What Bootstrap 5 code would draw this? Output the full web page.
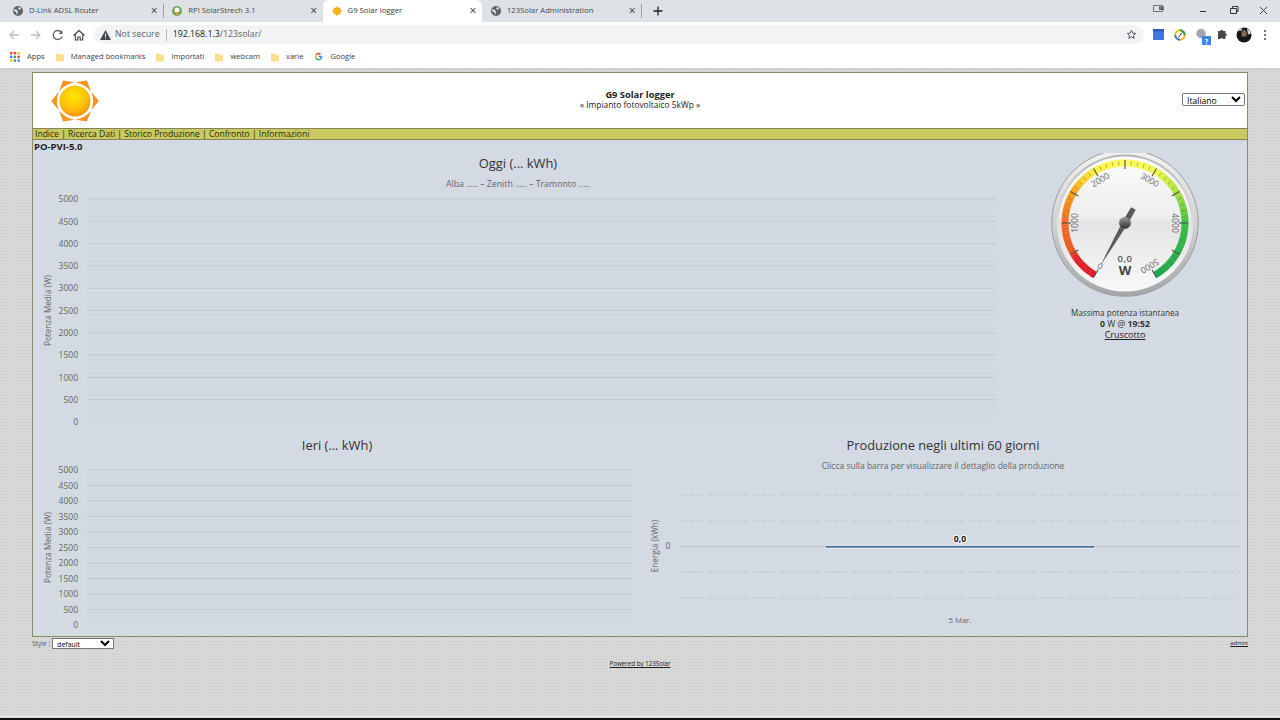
<!DOCTYPE html>
<html lang="it">
<head>
  <meta charset="UTF-8" />
  <title>G9 Solar logger</title>
  <link href="https://cdn.jsdelivr.net/npm/bootstrap@5.3.0/dist/css/bootstrap.min.css" rel="stylesheet"/>
  <style>
    html, body { height: 720px; overflow: hidden; }
    body { margin: 0; background: #fff; color: #222; font-family: "Open Sans", "Liberation Sans", sans-serif; font-size: 9px; line-height: 1.2; }
    svg text { font-family: "Open Sans", "Liberation Sans", sans-serif; }

    .tabstrip { height: 22px; background: #dee1e6; padding-left: 4px; }
    .chrometab { width: 159.3px; height: 22px; padding: 0 3px 0 9px; gap: 6px; font-size: 7.7px; color: #45494e; }
    .chrometab.on-tab { background: #fff; border-radius: 6px 6px 0 0; color: #333; }
    .chrometab .tab-name { flex: 1; white-space: nowrap; }
    .chrometab .tab-x { font-size: 12px; line-height: 1; width: 12px; text-align: center; color: #333; }
    .tab-sep { width: 1px; height: 14px; background: #9da0a5; flex: none; margin-right: -1px; }
    .newtab { margin-left: 12px; }
    .win-btns { margin-left: auto; }

    .toolbar { height: 24px; background: #fff; padding: 3px 0 2px 8px; }
    .addressbar { width: 1050px; height: 19px; background: #f1f3f4; border-radius: 10px; margin-left: 6px; padding: 0 7px 0 6px; font-size: 8.8px; color: #5f6368; white-space: nowrap; }
    .addr-sep { width: 1px; height: 12px; background: #b5b7ba; margin: 0 6px; }
    .addr-host { color: #202124; }
    .bookmarks { height: 22px; background: #fff; padding: 0 0 1px 10px; font-size: 7.6px; color: #3c4043; white-space: nowrap; }
    .bm-item { gap: 3px; margin-right: 11px; }
    .chrome-rule { height: 2px; background: #cfcfcf; }

    .pagearea { height: 646px; padding: 2px 32px 0; background-color: #d8d8d8; background-image: radial-gradient(#c9c9c9 .7px, transparent .8px); background-size: 3px 3px; }
    .screenedge { height: 4px; border-top: 1px solid #eee; border-bottom: 2px solid #111; background: #d5d5d5; }
    .solarbox { height: 565px; border: 1px solid #8b8b60; background: #d4dae3; }
    .solarhead { height: 55px; background: #fff; padding: 0 2px 2px 2px; color: #222; }
    .headside { flex: 1 1 0; }
    .sunlogo { margin-left: 16px; margin-top: 2px; }
    .headtitle { font-weight: 700; font-size: 9.3px; }
    .headsub { font-size: 8.4px; }
    .langsel { font-size: 8.6px; width: 63px; height: 13px; font-family: inherit; }
    .solarmenu { height: 12px; background: #c9c95f; border-top: 1px solid #85855a; border-bottom: 1px solid #85855a; padding-left: 2px; font-size: 8.55px; line-height: 10px; white-space: nowrap; color: #222; }
    .solarmenu a { color: #2b2b10; text-decoration: none; }
    .invname { height: 13px; padding-left: 1px; font-weight: 700; font-size: 9.5px; line-height: 13px; color: #222; }
    .chart-top { width: 970px; height: 277px; display: block; }
    .gaugecol { width: 244px; text-align: center; font-size: 8.7px; line-height: 10.8px; color: #333; }
    .gaugecol a { color: #222; font-size: 9px; }
    .maxpower { font-size: 8.1px; }
    .chart-half { width: 100%; height: 206px; display: block; }
    .sitefoot { font-size: 6.6px; color: #555; height: 12px; padding-top: 1px; }
    .sitefoot a, .poweredby a { color: #222; font-size: 6px; }
    .stylesel { font-size: 7px; line-height: 9px; width: 62px; height: 10.5px; margin-left: 2px; padding: 0; font-family: inherit; background: #fff; }
    .poweredby { text-align: center; margin-top: 9px; line-height: 9px; }
    .poweredby a { font-size: 6.2px; }
  </style>
</head>
<body>
  <!-- browser chrome -->
  <div class="tabstrip d-flex align-items-center">
    <div class="chrometab d-flex align-items-center">
      <svg width="10" height="10" viewBox="0 0 10 10"><circle cx="5" cy="5" r="5" fill="#5f6368"/><path d="M1 3l3 1 1 2-1 3-1-3-2-1zM6 1l2 1-1 2-2-1z" fill="#dee1e6"/></svg>
      <span class="tab-name">D-Link ADSL Router</span><span class="tab-x">×</span>
    </div>
    <div class="tab-sep"></div>
    <div class="chrometab d-flex align-items-center">
      <svg width="10" height="10" viewBox="0 0 10 10"><circle cx="5" cy="5" r="5" fill="#6aa84f"/><circle cx="5" cy="4" r="2.5" fill="#fff"/><path d="M3.5 6h3l-.5 3h-2z" fill="#d8a33a"/></svg>
      <span class="tab-name">RPI SolarStrech 3.1</span><span class="tab-x">×</span>
    </div>
    <div class="chrometab on-tab d-flex align-items-center">
      <svg width="10" height="10" viewBox="0 0 10 10"><circle cx="5" cy="5" r="3.6" fill="#fbb40f"/><path d="M5 0l1.4 1.8H3.6zM5 10l1.4-1.8H3.6zM0 5l1.8-1.4v2.8zM10 5L8.2 3.6v2.8zM1.5 1.5l2 .5-1.5 1.5zM8.5 1.5l-2 .5L8 3.5zM1.5 8.5l2-.5L2 6.5zM8.5 8.5l-2-.5L8 6.5z" fill="#f59c12"/></svg>
      <span class="tab-name">G9 Solar logger</span><span class="tab-x">×</span>
    </div>
    <div class="chrometab d-flex align-items-center">
      <svg width="10" height="10" viewBox="0 0 10 10"><circle cx="5" cy="5" r="5" fill="#5f6368"/><path d="M1 3l3 1 1 2-1 3-1-3-2-1zM6 1l2 1-1 2-2-1z" fill="#dee1e6"/></svg>
      <span class="tab-name">123Solar Administration</span><span class="tab-x">×</span>
    </div>
    <div class="tab-sep"></div>
    <svg class="newtab" width="10" height="10" viewBox="0 0 10 10"><path d="M5 .5v9M.5 5h9" stroke="#202124" stroke-width="1.3"/></svg>
    <div class="win-btns d-flex align-items-start">
      <svg width="127" height="22" viewBox="0 0 127 22">
        <path d="M0.5 5.500h9v6h-9z" fill="none" stroke="#555" stroke-width=".8"/><path d="M6 6.500h5v3.500h-5z" fill="#666"/>
        <path d="M47 11.500h6" stroke="#333"/>
        <path d="M77.500 8.500h6v5h-6zM79.500 8V6.500h5.500v5h-1.500" fill="none" stroke="#333"/>
        <path d="M107 7l7 7M114 7l-7 7" stroke="#444"/>
      </svg>
    </div>
  </div>

  <div class="toolbar d-flex align-items-center">
    <svg width="80" height="14" viewBox="0 0 80 14">
      <path d="M11 7H2M6 3L2 7l4 4" fill="none" stroke="#bcbfc3" stroke-width="1.300"/>
      <path d="M23 7h9M28 3l4 4-4 4" fill="none" stroke="#bcbfc3" stroke-width="1.300"/>
      <path d="M53.500 4.500A4.500 4.500 0 1 0 54 8.500" fill="none" stroke="#5f6368" stroke-width="1.300"/><path d="M54.500 2v4h-4z" fill="#5f6368"/>
      <path d="M71 2.500l-5 4.500h1.300v5h2.500V9h2.400v3h2.500V7h1.300z" fill="none" stroke="#3c4043" stroke-width="1.100"/>
    </svg>
    <div class="addressbar d-flex align-items-center">
      <svg width="11" height="10" viewBox="0 0 11 10"><path d="M5.500 0L11 10H0z" fill="#45494e"/><path d="M5 3.500h1v3.500H5zM5 7.800h1v1H5z" fill="#f1f3f4"/></svg>
      <span class="ms-1">Not secure</span><span class="addr-sep"></span><span class="addr-host">192.168.1.3</span><span>/123solar/</span>
      <svg class="ms-auto" width="11" height="11" viewBox="0 0 24 24"><path d="M12 3l2.800 6 6.500.7-4.900 4.300 1.400 6.500-5.800-3.400-5.800 3.400 1.400-6.500L2.700 9.700 9.200 9z" fill="none" stroke="#45494e" stroke-width="2"/></svg>
    </div>
    <svg class="ms-2" width="125" height="20" viewBox="0 0 125 20">
      <path d="M1 4h11v11H1z" fill="#3f78e0"/><path d="M1 4h11v2.500H1z" fill="#2b5cb8"/>
      <circle cx="28" cy="10" r="4.700" fill="none" stroke="#f2b81f" stroke-width="2"/><path d="M28 5.300a4.700 4.700 0 0 1 4.700 4.700" fill="none" stroke="#2f9e52" stroke-width="2"/><path d="M28 14.700a4.700 4.700 0 0 1-4.700-4.700" fill="none" stroke="#3c78d8" stroke-width="2"/><path d="M30 7.500l-3.500 5" stroke="#333"/>
      <circle cx="49" cy="8.500" r="4.700" fill="#a2a5a9"/><rect x="50" y="11" width="9" height="9" fill="#3b82f0"/><text x="54.500" y="18.500" font-size="7" font-weight="700" fill="#fff" text-anchor="middle">?</text>
      <path d="M66 6h2.500a1.300 1.300 0 0 1 2.600 0h2.400v2.500a1.300 1.300 0 0 1 0 2.600v2.900H71a1.300 1.300 0 0 0-2.500 0H66z" fill="#45494e"/>
      <circle cx="92" cy="10" r="7.500" fill="#151515"/><path d="M89.500 8.500a2.500 3.500 0 0 1 5 0v3h-5z" fill="#8a6a50"/><path d="M95 3.500a7.500 7.500 0 0 1 4 5l-3 1z" fill="#d8d4ce"/><path d="M85.500 6a7.500 7.500 0 0 1 5-3.300l-1 3z" fill="#bfc0c0"/>
      <circle cx="113" cy="6" r="1" fill="#45494e"/><circle cx="113" cy="10" r="1" fill="#45494e"/><circle cx="113" cy="14" r="1" fill="#45494e"/>
    </svg>
  </div>

  <div class="bookmarks d-flex align-items-center">
    <div class="bm-item d-flex align-items-center">
      <svg id="appsDots" width="10" height="10" viewBox="0 0 10 10"></svg><span class="ms-1">Apps</span>
    </div>
    <div class="bm-item d-flex align-items-center"><svg width="8" height="10" viewBox="0 0 9 10"><path d="M0 1h3.500l1 1.200H9V10H0z" fill="#fbdf8e"/></svg><span class="ms-1">Managed bookmarks</span></div>
    <div class="bm-item d-flex align-items-center"><svg width="8" height="10" viewBox="0 0 9 10"><path d="M0 1h3.500l1 1.200H9V10H0z" fill="#fbdf8e"/></svg><span class="ms-1">Importati</span></div>
    <div class="bm-item d-flex align-items-center"><svg width="8" height="10" viewBox="0 0 9 10"><path d="M0 1h3.500l1 1.200H9V10H0z" fill="#fbdf8e"/></svg><span class="ms-1">webcam</span></div>
    <div class="bm-item d-flex align-items-center"><svg width="8" height="10" viewBox="0 0 9 10"><path d="M0 1h3.500l1 1.200H9V10H0z" fill="#fbdf8e"/></svg><span class="ms-1">varie</span></div>
    <div class="bm-item d-flex align-items-center">
      <svg width="9" height="9" viewBox="0 0 18 18"><path d="M3 5a7.500 7.500 0 0 1 11.200-1.600L12 5.600A4.500 4.500 0 0 0 5.500 7z" fill="#ea4335"/><path d="M3 5l2.500 2a4.500 4.500 0 0 0 0 4L3 13a7.500 7.500 0 0 1 0-8z" fill="#fbbc05"/><path d="M3 13l2.500-2A4.500 4.500 0 0 0 12 13l2.300 1.800A7.500 7.500 0 0 1 3 13z" fill="#34a853"/><path d="M16.500 7.500H9v3h4.200A3.500 3.500 0 0 1 12 13l2.300 1.800a7.500 7.500 0 0 0 2.200-7.300z" fill="#4285f4"/></svg>
      <span class="ms-1">Google</span>
    </div>
  </div>
  <div class="chrome-rule"></div>

  <!-- page -->
  <div class="pagearea">
    <div class="solarbox">
      <div class="solarhead d-flex align-items-center">
        <div class="headside">
          <svg width="48" height="50" viewBox="-24 -25 48 50" class="d-block sunlogo">
            <defs>
              <radialGradient id="sunFill" cx="45%" cy="35%" r="70%"><stop offset="0" stop-color="#ffe600"/><stop offset=".6" stop-color="#fdbf0a"/><stop offset="1" stop-color="#f58a12"/></radialGradient>
            </defs>
            <g id="sunRays" fill="#f7941e"></g>
            <circle r="15.500" fill="url(#sunFill)"/>
          </svg>
        </div>
        <div class="text-center">
          <div class="headtitle">G9 Solar logger</div>
          <div class="headsub">« Impianto fotovoltaico 5kWp »</div>
        </div>
        <div class="headside text-end">
          <select class="langsel"><option>Italiano</option></select>
        </div>
      </div>
      <div class="solarmenu">
        <a href="#">Indice</a> | <a href="#">Ricerca Dati</a> | <a href="#">Storico Produzione</a> | <a href="#">Confronto</a> | <a href="#">Informazioni</a>
      </div>
      <div class="invname">PO-PVI-5.0</div>
      <div class="d-flex">
        <svg id="chartToday" class="chart-top" viewBox="33 153 970 277"></svg>
        <div class="gaugecol">
          <svg id="gauge" class="d-block" width="244" height="155" viewBox="1003 153 244 155"></svg>
          <div class="maxpower">Massima potenza istantanea</div>
          <div><b>0</b> W @ <b>19:52</b></div>
          <a href="#">Cruscotto</a>
        </div>
      </div>
      <div class="row g-0">
        <div class="col-6"><svg id="chartYesterday" class="chart-half" viewBox="33 430 607 206"></svg></div>
        <div class="col-6"><svg id="chartDays" class="chart-half" viewBox="640 430 607 206"></svg></div>
      </div>
    </div>
    <div class="sitefoot d-flex align-items-center justify-content-between">
      <div class="d-flex align-items-center">Style :<select class="stylesel"><option>default</option></select></div>
      <a href="#">admin</a>
    </div>
    <div class="poweredby"><a href="#">Powered by 123Solar</a></div>
  </div>
  <div class="screenedge"></div>

  <script>
    const NS = "http://www.w3.org/2000/svg";
    function add(parent, tag, attrs, txt) {
      const el = document.createElementNS(NS, tag);
      for (const k in attrs) el.setAttribute(k, attrs[k]);
      if (txt !== undefined) el.textContent = txt;
      parent.appendChild(el);
      return el;
    }
    function chartText(parent, attrs, txt) {
      return add(parent, "text", Object.assign({"text-anchor": "middle", "dominant-baseline": "middle", dy: 1, fill: "#666"}, attrs), txt);
    }

    // apps dots
    const appColors = ["#ea4335","#ea4335","#fbbc05","#4285f4","#34a853","#ea4335","#fbbc05","#34a853","#4285f4"];
    appColors.forEach((c, i) => add(document.getElementById("appsDots"), "rect", {x: (i % 3) * 3.7, y: Math.floor(i / 3) * 3.7, width: 2.4, height: 2.4, fill: c}));

    // logo rays
    [30, 90, 150, 210, 270, 330].forEach(a => {
      add(document.getElementById("sunRays"), "path", {d: "M0 -23.800L-9 -16.500Q0 -19.500 9 -16.500Z", transform: "rotate(" + a + ")"});
    });

    // line chart frame with hundreds grid
    function powerChart(id, o) {
      const s = document.getElementById(id);
      chartText(s, {x: o.cx, y: o.titleY, "font-size": 12.9, fill: "#333"}, o.title);
      if (o.sub) chartText(s, {x: o.cx, y: o.titleY + 20, "font-size": 8.8}, o.sub);
      const step = (o.y0 - o.y5000) / 50;
      for (let i = 0; i <= 50; i++) {
        const y = o.y0 - i * step;
        const major = i % 5 === 0;
        if (i > 0) add(s, "line", {x1: o.x1, x2: o.x2, y1: y, y2: y, stroke: major ? "#c3c7ce" : "#cbd1da", "stroke-width": major ? 1 : .6});
        if (major) chartText(s, {x: 78, y: y, "font-size": 8.5, "text-anchor": "end"}, i * 100);
      }
      const my = (o.y0 + o.y5000) / 2;
      chartText(s, {x: 48, y: my, "font-size": 8.2, transform: "rotate(-90 48 " + my + ")"}, "Potenza Media (W)");
    }
    powerChart("chartToday", {title: "Oggi (... kWh)", sub: "Alba ..... – Zenith ..... – Tramonto .....", cx: 518, titleY: 164, x1: 87, x2: 996, y0: 422, y5000: 199});
    powerChart("chartYesterday", {title: "Ieri (... kWh)", cx: 337, titleY: 446, x1: 87, x2: 632, y0: 625, y5000: 470});

    // last 60 days
    const d = document.getElementById("chartDays");
    chartText(d, {x: 943, y: 446, "font-size": 12.8, fill: "#333"}, "Produzione negli ultimi 60 giorni");
    chartText(d, {x: 943, y: 466, "font-size": 8.5}, "Clicca sulla barra per visualizzare il dettaglio della produzione");
    [495, 521, 572, 598].forEach(y => add(d, "line", {x1: 680, x2: 1239, y1: y, y2: y, stroke: "#c4c7cb", "stroke-dasharray": "6 3"}));
    add(d, "line", {x1: 680, x2: 1239, y1: 546.5, y2: 546.5, stroke: "#bfc2c5"});
    add(d, "line", {x1: 680, x2: 1239, y1: 610, y2: 610, stroke: "#cdd6e4"});
    add(d, "rect", {x: 826, y: 545.5, width: 268, height: 3, fill: "#eef2f6"});
    add(d, "rect", {x: 826, y: 546, width: 268, height: 1.6, fill: "#3b6696"});
    chartText(d, {x: 668, y: 546, "font-size": 8.6}, "0");
    chartText(d, {x: 960, y: 539, "font-size": 8.6, "font-weight": 700, fill: "#111", stroke: "#fff", "stroke-width": 2, "paint-order": "stroke"}, "0,0");
    chartText(d, {x: 960, y: 620, "font-size": 7.8}, "5 Mar.");
    chartText(d, {x: 655, y: 546, "font-size": 8.2, transform: "rotate(-90 655 546)"}, "Energia (kWh)");

    // gauge, 0 W at -150deg and 5000 W at +150deg
    const g = document.getElementById("gauge");
    const cx = 1125, cy = 223;
    const defs = add(g, "defs", {});
    function lin(id, x1, y1, x2, y2, stops) {
      const l = add(defs, "linearGradient", {id: id, x1: x1, y1: y1, x2: x2, y2: y2});
      stops.forEach(st => add(l, "stop", {offset: st[0], "stop-color": st[1]}));
    }
    lin("rimOut", 0, 0, 0, 1, [[0, "#f2f2f2"], [.5, "#d0d1d2"], [1, "#a4a6a8"]]);
    lin("rimIn", 0, 0, 0, 1, [[0, "#b4b6b8"], [.5, "#dedede"], [1, "#fafafa"]]);
    lin("dial", 0, 0, 0, 1, [[0, "#fbfbfb"], [.45, "#eeeeee"], [.5, "#e4e4e4"], [1, "#f8f8f8"]]);
    lin("hubFill", 0, 0, 0, 1, [[0, "#9a9a9a"], [1, "#2e2e2e"]]);
    add(g, "circle", {cx: cx, cy: cy, r: 73.3, fill: "url(#rimOut)", stroke: "#9b9d9f", "stroke-width": 1});
    add(g, "circle", {cx: cx, cy: cy, r: 68.5, fill: "url(#rimIn)"});
    add(g, "circle", {cx: cx, cy: cy, r: 66.5, fill: "url(#dial)"});

    function polar(r, deg) {
      const a = (deg - 90) * Math.PI / 180;
      return [cx + r * Math.cos(a), cy + r * Math.sin(a)];
    }
    function hexMix(a, b, t) {
      const p = h => [1, 3, 5].map(i => parseInt(h.substr(i, 2), 16));
      const A = p(a), B = p(b);
      return "rgb(" + A.map((v, i) => Math.round(v + (B[i] - v) * t)).join(",") + ")";
    }
    const bandStops = [[0,"#e3141f"],[400,"#e8161e"],[500,"#f2501a"],[1000,"#fb6a1c"],[1500,"#fc9c12"],[1700,"#fdc820"],[2000,"#fdf03f"],[2500,"#fdfd58"],[3000,"#f0fb4a"],[3500,"#a2e03a"],[4000,"#35bd45"],[5000,"#12a545"]];
    function bandColor(w) {
      for (let i = 1; i < bandStops.length; i++) {
        if (w <= bandStops[i][0]) {
          const a = bandStops[i - 1], b = bandStops[i];
          return hexMix(a[1], b[1], (w - a[0]) / (b[0] - a[0]));
        }
      }
      return bandStops[bandStops.length - 1][1];
    }
    for (let w = 0; w < 5000; w += 25) {
      const a1 = -150 + w * .06, a2 = -150 + (w + 25) * .06 + .2;
      const p1 = polar(60, a1), p2 = polar(60, a2);
      add(g, "path", {d: `M${p1[0]} ${p1[1]}A60 60 0 0 1 ${p2[0]} ${p2[1]}`, fill: "none", stroke: bandColor(w), "stroke-width": 7});
    }
    for (let w = 0; w <= 5000; w += 100) {
      const major = w % 500 === 0;
      const a = -150 + w * .06;
      const p1 = polar(major ? 54 : 58, a), p2 = polar(major ? 63 : 62, a);
      add(g, "line", {x1: p1[0], y1: p1[1], x2: p2[0], y2: p2[1], stroke: major ? "#555" : "#7d7d50", "stroke-width": major ? 1.2 : .6});
    }
    for (let w = 0; w <= 5000; w += 1000) {
      const a = -150 + w * .06;
      const p = polar(49, a);
      add(g, "text", {x: p[0], y: p[1], "font-size": 8.6, fill: "#666", "text-anchor": "middle", "dominant-baseline": "middle", transform: `rotate(${a} ${p[0]} ${p[1]})`}, w);
    }
    add(g, "text", {x: cx, y: 259.5, "font-size": 9.5, "font-weight": 600, "letter-spacing": .5, fill: "#555", "text-anchor": "middle", "dominant-baseline": "middle"}, "0,0");
    add(g, "text", {x: cx, y: 272, "font-size": 13, "font-weight": 700, fill: "#444", "text-anchor": "middle", "dominant-baseline": "middle"}, "W");
    const tip = polar(50, -150), ta = polar(2.8, -60), tb = polar(2.8, 120), t1 = polar(-17, -150 + 9), t2 = polar(-17, -150 - 9);
    add(g, "path", {d: `M${tip}L${ta}L${t2}L${t1}L${tb}Z`, fill: "#5a5a5a"});
    add(g, "circle", {cx: cx, cy: cy, r: 5.8, fill: "url(#hubFill)", stroke: "#777", "stroke-width": .5});
  </script>
  <script src="https://cdn.jsdelivr.net/npm/bootstrap@5.3.0/dist/js/bootstrap.bundle.min.js"></script>
</body>
</html>
